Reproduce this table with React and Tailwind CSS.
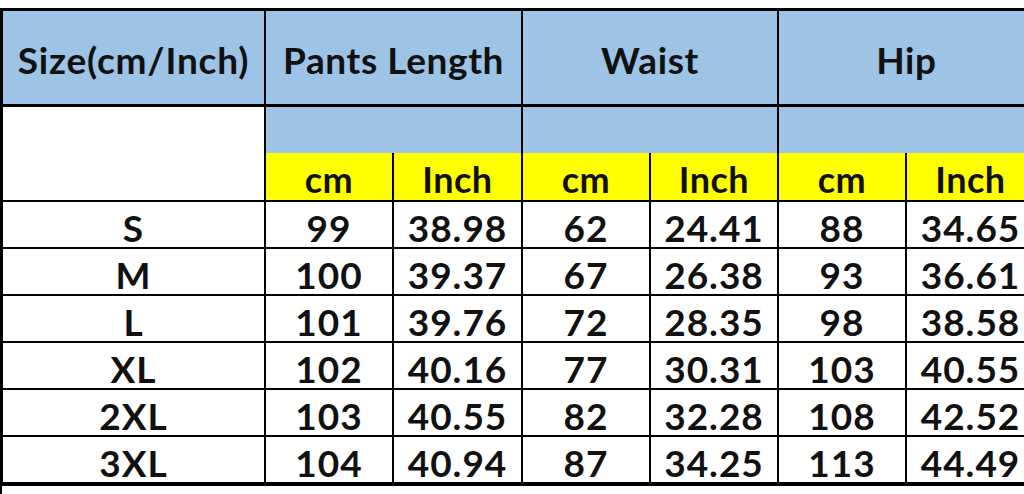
import React from "react";

const rows = [
  ["S", "99", "38.98", "62", "24.41", "88", "34.65"],
  ["M", "100", "39.37", "67", "26.38", "93", "36.61"],
  ["L", "101", "39.76", "72", "28.35", "98", "38.58"],
  ["XL", "102", "40.16", "77", "30.31", "103", "40.55"],
  ["2XL", "103", "40.55", "82", "32.28", "108", "42.52"],
  ["3XL", "104", "40.94", "87", "34.25", "113", "44.49"],
];

const font = { fontFamily: "Lato, 'Open Sans', sans-serif" };

function Group() {
  return (
    <div className="col-span-2 flex flex-col h-[93px]">
      <div className="h-[46px] bg-[#9dc3e6]" />
      <div className="h-[47px] grid grid-cols-[126px_1fr] gap-x-[2px] bg-black">
        <div className="bg-[#ffff00] flex items-center justify-center pt-[4px] tracking-[0.5px]">cm</div>
        <div className="bg-[#ffff00] flex items-center justify-center pt-[4px] tracking-[0.5px]">Inch</div>
      </div>
    </div>
  );
}

export default function App() {
  return (
    <div className="w-[1024px] h-[494px] overflow-hidden bg-white" style={font}>
      <div className="h-[8px]" />
      <div className="w-[1034px] bg-black border-l-[3px] border-t-[3px] border-b-[4px] border-black grid grid-cols-[261px_126px_127px_126px_126px_126px_127px] gap-[2px] text-[36px] leading-none font-bold text-[#111]">
        <div className="h-[94px] border-b border-black bg-[#9dc3e6] flex items-center justify-center pt-[3px] text-[37px] tracking-[0.8px]">
          Size(cm/Inch)
        </div>
        <div className="col-span-2 h-[94px] border-b border-black bg-[#9dc3e6] flex items-center justify-center pt-[3px] text-[37px] tracking-[0.6px]">
          Pants Length
        </div>
        <div className="col-span-2 h-[94px] border-b border-black bg-[#9dc3e6] flex items-center justify-center pt-[3px] text-[37px] tracking-[0.6px]">
          Waist
        </div>
        <div className="col-span-2 h-[94px] border-b border-black bg-[#9dc3e6] flex items-center justify-center pt-[3px] text-[37px] tracking-[0.6px]">
          Hip
        </div>

        <div className="h-[93px] bg-white" />
        <Group />
        <Group />
        <Group />

        {rows.map((r) =>
          r.map((c, i) => (
            <div
              key={r[0] + i}
              className="h-[45px] bg-white flex items-center justify-center pt-[5px] text-[37px] tracking-[1px]"
            >
              {c}
            </div>
          ))
        )}
      </div>
      <div className="h-[10px] w-[2px] bg-black" />
    </div>
  );
}
